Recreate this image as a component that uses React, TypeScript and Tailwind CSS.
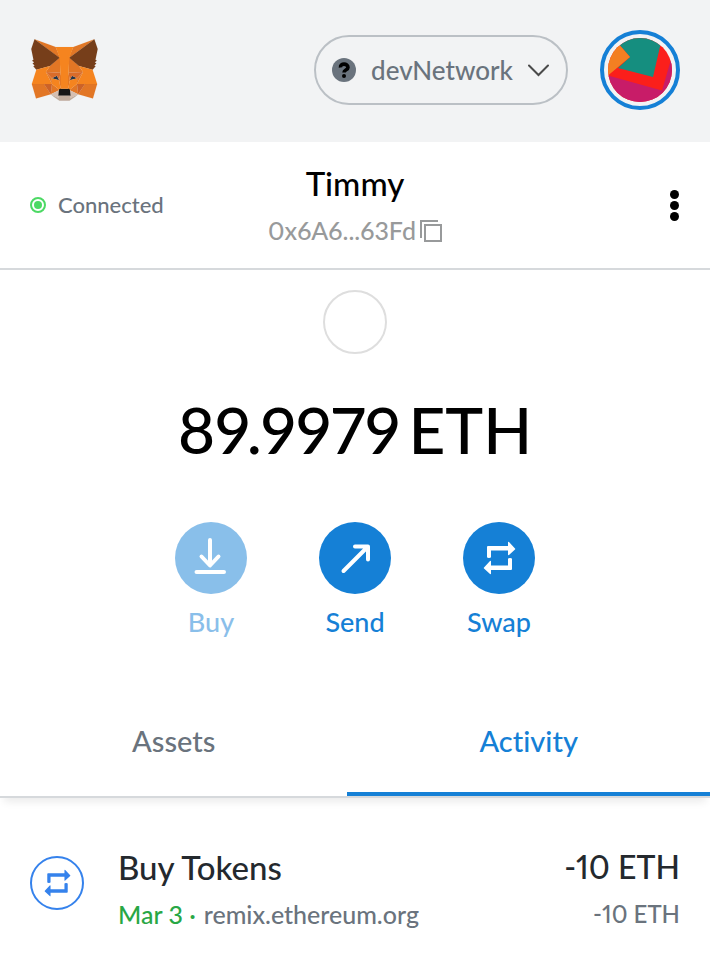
import React from "react";

const FOX: [string, string][] = [
  ["#e17726", "274.1,35.5 174.6,109.4 193,65.8"],
  ["#e27625", "44.4,35.5 143.1,110.1 125.6,65.8"],
  ["#e27625", "238.3,206.8 211.8,247.4 268.5,263 284.8,207.7"],
  ["#e27625", "33.9,207.7 50.1,263 106.8,247.4 80.3,206.8"],
  ["#e27625", "103.6,138.2 87.8,162.1 144.1,164.6 142.1,104.1"],
  ["#e27625", "214.9,138.2 175.9,103.4 174.6,164.6 230.8,162.1"],
  ["#e27625", "106.8,247.4 140.6,230.9 111.4,208.1"],
  ["#e27625", "177.9,230.9 211.8,247.4 207.1,208.1"],
  ["#d5bfb2", "211.8,247.4 177.9,230.9 180.6,253 180.3,262.3"],
  ["#d5bfb2", "106.8,247.4 138.3,262.3 138.1,253 140.6,230.9"],
  ["#233447", "138.8,193.5 110.6,185.2 130.5,176.1"],
  ["#233447", "179.7,193.5 188,176.1 208,185.2"],
  ["#cc6228", "106.8,247.4 111.6,206.8 80.3,207.7"],
  ["#cc6228", "207,206.8 211.8,247.4 238.3,207.7"],
  ["#d96c2a", "230.8,162.1 174.6,164.6 179.8,193.5 188.1,176.1 208.1,185.2"],
  ["#d96c2a", "110.6,185.2 130.6,176.1 138.8,193.5 144.1,164.6 87.8,162.1"],
  ["#e27525", "87.8,162.1 111.4,208.1 110.6,185.2"],
  ["#e27525", "208.1,185.2 207.1,208.1 230.8,162.1"],
  ["#e27525", "144.1,164.6 138.8,193.5 145.4,227.6 146.9,182.7"],
  ["#e27525", "174.6,164.6 171.9,182.6 173.1,227.6 179.8,193.5"],
  ["#f5841f", "179.8,193.5 173.1,227.6 177.9,230.9 207.1,208.1 208.1,185.2"],
  ["#f5841f", "110.6,185.2 111.4,208.1 140.6,230.9 145.4,227.6 138.8,193.5"],
  ["#c0ac9d", "180.3,262.3 180.6,253 178.1,250.8 140.4,250.8 138.1,253 138.3,262.3 106.8,247.4 117.8,256.4 140.1,271.9 178.4,271.9 200.8,256.4 211.8,247.4"],
  ["#161616", "180,229 175,226 143.500,226 138.500,229 136,253 140.4,251.500 178.1,251.500 182.500,253"],
  ["#763e1a", "278.3,114.2 286.8,73.4 274.1,35.5 177.9,106.9 214.9,138.2 267.2,153.5 278.8,140 273.8,136.4 281.8,129.1 275.6,124.3 283.6,118.2"],
  ["#763e1a", "31.8,73.4 40.3,114.2 34.9,118.2 42.9,124.3 36.8,129.1 44.8,136.4 39.8,140 51.3,153.5 103.6,138.2 140.6,106.9 44.4,35.5"],
  ["#f5841f", "267.2,153.5 214.9,138.2 230.8,162.1 207.1,208.1 238.3,207.7 284.8,207.7"],
  ["#f5841f", "103.6,138.2 51.3,153.5 33.9,207.7 80.3,207.7 111.4,208.1 87.8,162.1"],
  ["#f5841f", "174.6,164.6 177.9,106.9 193.1,65.8 125.6,65.8 140.6,106.9 144.1,164.6 145.3,182.8 145.4,226 173.1,226 173.3,182.8"],
];

function FoxLogo() {
  return (
    <svg viewBox="27 35 261 238" className="h-[62px] w-[68px]" aria-hidden="true">
      {FOX.map(([fill, points], i) => (
        <polygon key={i} fill={fill} stroke={fill} strokeWidth="0.25" strokeLinejoin="round" points={points} />
      ))}
    </svg>
  );
}

function AccountAvatar() {
  return (
    <svg viewBox="0 0 64 64" className="size-16" aria-hidden="true">
      <clipPath id="avatar-clip">
        <circle cx="32" cy="32" r="32" />
      </clipPath>
      <g clipPath="url(#avatar-clip)">
        <rect width="64" height="64" fill="#fb1f1b" />
        <path d="M0 37.5 54 52.5 64 18V64H0Z" fill="#c81c68" />
        <path d="M10 30 45 39 54 0H10L12 7.500 22 19Z" fill="#158e7f" />
        <path d="M0 0H8L12 7.500 22 19 0 37.500Z" fill="#f37f22" />
      </g>
    </svg>
  );
}

function SwapArrows({ className }: { className: string }) {
  return (
    <svg viewBox="0 0 33 34" className={className} fill="currentColor" aria-hidden="true">
      <path d="M4 16V6Q4 5 5 5H25V1.500Q25 .5 26 1L32 7.500Q32.500 8 32 8.500L26 14Q25 14.500 25 13.500V9.500H8V16Q8 17 6 17T4 16Z" />
      <path d="M29 18V28Q29 29 28 29H8V32.500Q8 33.500 7 33L1 27.500Q.5 27 1 26.500L7 20Q8 19.500 8 20.500V24.500H25V18Q25 17 27 17T29 18Z" />
    </svg>
  );
}

function DownloadIcon() {
  return (
    <svg viewBox="0 0 36 40" className="h-10 w-9" fill="none" stroke="currentColor" strokeWidth="4" strokeLinecap="round" strokeLinejoin="round" aria-hidden="true">
      <path d="M17 2V27M8.500 18.500 17 27.500 25.500 18.500M3.500 34H31" />
    </svg>
  );
}

function SendArrow() {
  return (
    <svg viewBox="0 0 36 36" className="size-9" fill="none" stroke="currentColor" strokeWidth="4" strokeLinecap="round" strokeLinejoin="round" aria-hidden="true">
      <path d="M6.500 31 30.500 7M18 6.500H31V19.500" />
    </svg>
  );
}

function Action({ label, disabled, children }: { label: string; disabled?: boolean; children: React.ReactNode }) {
  return (
    <button type="button" disabled={disabled} className="flex w-36 flex-col items-center gap-2 text-[#1580d6] disabled:opacity-50">
      <span className="flex size-[72px] items-center justify-center rounded-full bg-[#1580d6] text-white">{children}</span>
      <span className="text-[27px] leading-10">{label}</span>
    </button>
  );
}

export default function App() {
  return (
    <main className="min-h-screen bg-white font-[Lato,sans-serif] font-medium proportional-nums text-black [font-variant-ligatures:none]">
      <header className="flex h-[142px] items-center bg-[#f2f3f4] px-[30px] pb-0.5">
        <FoxLogo />
        <button type="button" className="ml-auto flex h-[70px] w-[254px] items-center rounded-full border-2 border-[#bbc0c5] px-4 text-[#6a737d]">
          <svg viewBox="0 0 24 24" className="size-6 shrink-0" aria-hidden="true">
            <circle cx="12" cy="12" r="12" fill="#6a737d" />
            <path d="M8.500 9.500C8 5 16 5 16 9.500 16 12 12 11.500 12 14.500" fill="none" stroke="#000" strokeWidth="3.600" />
            <circle cx="12" cy="18" r="2" fill="#000" />
          </svg>
          <span className="flex-1 text-[26px] leading-8">devNetwork</span>
          <svg viewBox="0 0 22 14" className="h-3.5 w-[22px] shrink-0" fill="none" stroke="#4a4a4a" strokeWidth="2" strokeLinecap="round" aria-hidden="true">
            <path d="M1 2.500 10.500 12 20 2.500" />
          </svg>
        </button>
        <button type="button" aria-label="Account menu" className="ml-8 flex size-20 items-center justify-center rounded-full border-4 border-[#1580d6]">
          <AccountAvatar />
        </button>
      </header>

      <section className="grid h-32 grid-cols-[1fr_auto_1fr] items-center border-b-2 border-[#d6d9dc] px-[30px]">
        <div className="flex items-center gap-3 text-[#6a737d]">
          <span className="flex size-4 items-center justify-center rounded-full border-2 border-[#4cd964]">
            <span className="size-2 rounded-full bg-[#4cd964]" />
          </span>
          <span className="text-[22px] leading-7">Connected</span>
        </div>
        <button type="button" className="flex flex-col items-center pt-1">
          <span className="text-[33px] leading-[46px]">Timmy</span>
          <span className="flex items-center gap-1 text-[25px] leading-[48px] text-[#989a9b]">
            0x6A6...63Fd
            <svg viewBox="0 0 22 24" className="h-6 w-[22px]" fill="none" stroke="currentColor" strokeWidth="2" aria-hidden="true">
              <path d="M1 20V3H18M5 7H21V23H5Z" />
            </svg>
          </span>
        </button>
        <button type="button" aria-label="Account options" className="flex w-3 flex-col items-center gap-0.5 justify-self-end">
          <span className="size-[9px] rounded-full bg-black" />
          <span className="size-[9px] rounded-full bg-black" />
          <span className="size-[9px] rounded-full bg-black" />
        </button>
      </section>

      <section className="flex flex-col items-center pt-5">
        <div className="size-16 rounded-full border-2 border-[#dedede]" />
        <p className="mt-9 flex gap-2 text-[64px] leading-[80px]">
          <span>89.9979</span>
          <span>ETH</span>
        </p>
        <div className="mt-[52px] flex">
          <Action label="Buy" disabled><DownloadIcon /></Action>
          <Action label="Send"><SendArrow /></Action>
          <Action label="Swap"><SwapArrows className="h-[34px] w-[33px]" /></Action>
        </div>
      </section>

      <div role="tablist" className="mt-12 flex h-[108px] border-b-2 border-[#d6d9dc] text-[29px] leading-9 shadow-[0_8px_8px_-4px_rgba(0,0,0,0.08)]">
        <button type="button" role="tab" aria-selected="false" className="flex-auto border-b-4 border-transparent text-[#6a737d]">Assets</button>
        <button type="button" role="tab" aria-selected="true" className="flex-auto border-b-4 border-[#1580d6] text-[#1580d6]">Activity</button>
      </div>

      <article className="flex items-start px-[30px] pt-11">
        <span className="mt-3.5 flex size-[54px] shrink-0 items-center justify-center rounded-full border-2 border-[#3582ec] text-[#3582ec]">
          <SwapArrows className="h-7 w-[27px]" />
        </span>
        <div className="ml-[34px] flex-1">
          <h2 className="text-[33px] leading-[50px] text-[#24292e]">Buy Tokens</h2>
          <p className="flex gap-2 text-[25px] leading-[44px] text-[#6a737d]">
            <span className="text-[#28a745]">Mar 3 ·</span>
            <span>remix.ethereum.org</span>
          </p>
        </div>
        <div className="text-right">
          <p className="text-[32px] leading-[50px] text-[#24292e]">-10 ETH</p>
          <p className="text-[24px] leading-[44px] text-[#6a737d]">-10 ETH</p>
        </div>
      </article>
    </main>
  );
}
